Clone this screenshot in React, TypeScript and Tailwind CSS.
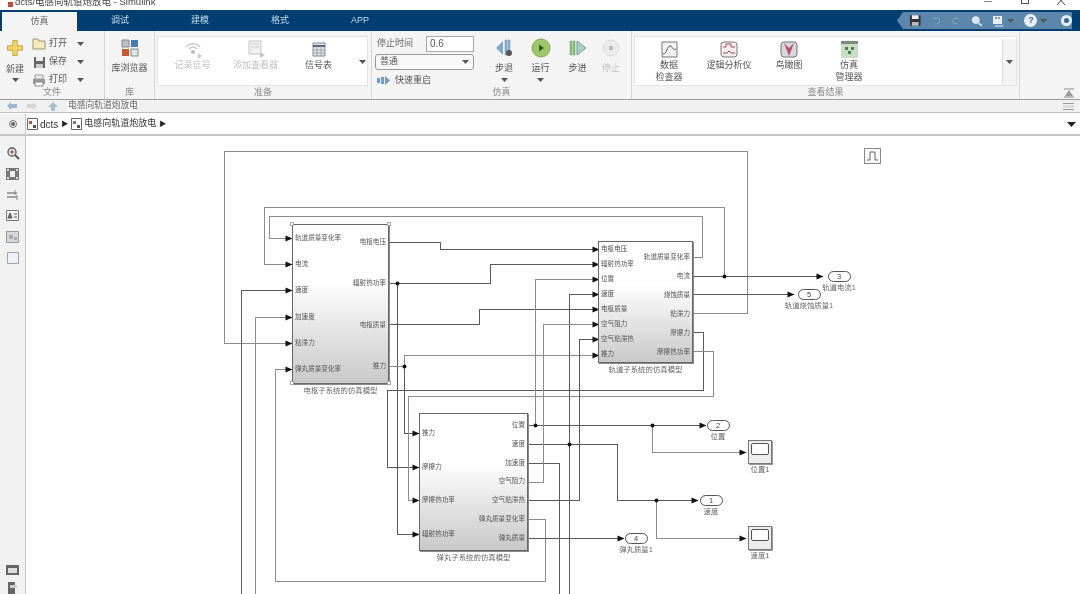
import type { ReactNode } from "react";

const CJK = "font-['Liberation_Sans','Noto_Sans_CJK_SC',sans-serif]";

type Wire = { pts: string; arrow?: boolean; light?: boolean };

// wire coordinates are page pixels, the svg viewBox lines them up with the canvas
const wires: Wire[] = [
  { pts: "693,313 747,313 747,151 224,151 224,343 291,343", arrow: true, light: true },
  { pts: "693,276 822,276", arrow: true },
  { pts: "724,276 724,207 264,207 264,264 291,264", arrow: true, light: true },
  { pts: "693,257 702,257 702,216 269,216 269,238 291,238", arrow: true, light: true },
  { pts: "389,242 440,242 440,249 598,249", arrow: true },
  { pts: "389,283 490,283 490,264 598,264", arrow: true },
  { pts: "397,283 397,534 418,534", arrow: true },
  { pts: "389,324 479,324 479,309 598,309", arrow: true },
  { pts: "389,366 404,366 404,355 598,355", arrow: true, light: true },
  { pts: "404,366 404,433 418,433", arrow: true },
  { pts: "693,332 703,332 703,390 387,390 387,467 418,467", arrow: true },
  { pts: "693,351 713,351 713,396 408,396 408,500 418,500", arrow: true, light: true },
  { pts: "241,594 241,290 291,290", arrow: true },
  { pts: "255,594 255,317 291,317", arrow: true, light: true },
  { pts: "528,519 545,519 545,581 275,581 275,369 291,369", arrow: true, light: true },
  { pts: "528,425 705,425", arrow: true },
  { pts: "535,425 535,279 598,279", arrow: true, light: true },
  { pts: "652,425 652,452 745,452", arrow: true, light: true },
  { pts: "528,444 617,444 617,500 697,500", arrow: true },
  { pts: "656,500 656,538 745,538", arrow: true, light: true },
  { pts: "569,594 569,294 598,294", arrow: true },
  { pts: "528,463 559,463 559,594" },
  { pts: "528,482 543,482 543,324 598,324", arrow: true, light: true },
  { pts: "528,500 579,500 579,339 598,339", arrow: true },
  { pts: "528,538 623,538", arrow: true },
  { pts: "693,294 793,294", arrow: true },
];

const junctions = [
  [724, 276],
  [397, 283],
  [404, 366],
  [535, 425],
  [652, 425],
  [569, 444],
  [656, 500],
];

function arrowHead(pts: string) {
  const last = pts.trim().split(" ").pop()!.split(",").map(Number);
  return `${last[0] + 1},${last[1]} ${last[0] - 6},${last[1] - 3} ${last[0] - 6},${last[1] + 3}`;
}

function Caret({ className = "" }: { className?: string }) {
  return (
    <svg width="7" height="4" viewBox="0 0 7 4" className={className}>
      <path d="M0 0h7L3.5 4z" fill="#555" />
    </svg>
  );
}

function Section({ label, className, children }: { label: string; className: string; children: ReactNode }) {
  return (
    <div className={`flex h-full shrink-0 flex-col border-r border-[#d6d6d6] ${className}`}>
      <div className="min-h-0 flex-1">{children}</div>
      <div className="h-[12px] text-center text-[9px] leading-[10px] text-[#8a8a8a]">{label}</div>
    </div>
  );
}

function RibbonButton({
  icon,
  label,
  width,
  muted,
  caret,
  compact,
}: {
  icon: ReactNode;
  label: ReactNode;
  width: string;
  muted?: boolean;
  caret?: boolean;
  compact?: boolean;
}) {
  return (
    <div className={`flex shrink-0 flex-col items-center ${width}`}>
      <div className={`flex items-center justify-center ${compact ? "h-[20px]" : "h-[24px]"}`}>{icon}</div>
      <div className={`text-center text-[9px] leading-[12px] ${compact ? "" : "mt-[2px]"} ${muted ? "text-[#c0c0c0]" : "text-[#555]"}`}>
        {label}
      </div>
      {caret && <Caret className="mt-[4px]" />}
    </div>
  );
}

function FileRow({ icon, label }: { icon: ReactNode; label: string }) {
  return (
    <div className="flex h-[18px] items-center">
      <div className="flex w-[18px] justify-center">{icon}</div>
      <span className="ml-[1px] w-[28px] text-[9px] text-[#555]">{label}</span>
      <Caret />
    </div>
  );
}

function Port({ children, right }: { children: string; right?: boolean }) {
  return (
    <div className={`text-[6.6px] leading-[8px] whitespace-nowrap text-[#555] ${right ? "text-right" : ""}`}>
      {children}
    </div>
  );
}

function Subsystem({
  className,
  caption,
  inputs,
  outputs,
  inPad,
  outPad,
  selected,
}: {
  className: string;
  caption: string;
  inputs: string[];
  outputs: string[];
  inPad: string;
  outPad: string;
  selected?: boolean;
}) {
  return (
    <div className={`absolute ${className}`}>
      <div className="flex h-full justify-between border border-[#666] bg-linear-to-b from-white from-35% to-[#c9c9c9] px-[2px] shadow-[1px_1px_0_#8a8a8a]">
        <div className={`flex flex-col justify-between ${inPad}`}>
          {inputs.map((t) => (
            <Port key={t}>{t}</Port>
          ))}
        </div>
        <div className={`flex flex-col justify-between ${outPad}`}>
          {outputs.map((t) => (
            <Port key={t} right>
              {t}
            </Port>
          ))}
        </div>
      </div>
      <div className="mt-[2px] text-center text-[7.4px] leading-[9px] whitespace-nowrap text-[#666]">{caption}</div>
      {selected && (
        <>
          <span className="absolute -top-[2px] -left-[2px] size-[4px] border border-[#aaa] bg-white" />
          <span className="absolute -top-[2px] -right-[2px] size-[4px] border border-[#aaa] bg-white" />
          <span className="absolute top-[157px] -left-[2px] size-[4px] border border-[#aaa] bg-white" />
          <span className="absolute top-[157px] -right-[2px] size-[4px] border border-[#aaa] bg-white" />
        </>
      )}
    </div>
  );
}

function Outport({ className, num, label }: { className: string; num: number; label: string }) {
  return (
    <div className={`absolute flex w-[80px] flex-col items-center ${className}`}>
      <div className="flex h-[11px] w-[23px] items-center justify-center rounded-full border border-[#555] bg-white text-[7.5px] text-[#444]">
        {num}
      </div>
      <div className="mt-[1px] text-[7.4px] leading-[10px] whitespace-nowrap text-[#666]">{label}</div>
    </div>
  );
}

function Scope({ className, label }: { className: string; label: string }) {
  return (
    <div className={`absolute flex w-[60px] flex-col items-center ${className}`}>
      <div className="h-[24px] w-[24px] border border-[#777] bg-[#ececec] p-[2px] pb-[8px] shadow-[1px_1px_0_#999]">
        <div className="h-full rounded-[2px] border border-[#555] bg-white" />
      </div>
      <div className="mt-[1px] text-[7.4px] leading-[10px] whitespace-nowrap text-[#666]">{label}</div>
    </div>
  );
}

function Icon({ children, w = 16, h = 16, vb }: { children: ReactNode; w?: number; h?: number; vb?: string }) {
  return (
    <svg width={w} height={h} viewBox={vb ?? `0 0 ${w} ${h}`}>
      {children}
    </svg>
  );
}

function WinTabs() {
  return (
    <div className="flex h-[21px] shrink-0 items-end bg-[#003e72] pl-[2px]">
      <div className="flex h-[19px] w-[75px] items-center justify-center bg-[#f4f4f4] text-[9px] text-[#666]">仿真</div>
      {["调试", "建模", "格式", "APP"].map((t, i) => (
        <div key={t} className={`flex h-[21px] items-center justify-center text-[9px] text-[#c3dcee] ${i === 0 ? "ml-[3px] w-[80px]" : "w-[80px]"}`}>
          {t}
        </div>
      ))}
      <div className="mt-auto mr-[8px] mb-[2px] ml-auto flex h-[17px] w-[175px] items-center gap-[10px] bg-[#5c87ad] pl-[12px] [clip-path:polygon(6px_0,100%_0,100%_100%,6px_100%,0_50%)]">
        <Icon w={13} h={13}>
          <path d="M1 1h11v11H1z" fill="#333" />
          <path d="M3 1h7v4H3z" fill="#eee" />
          <path d="M3 8h7v4H3z" fill="#bbb" />
        </Icon>
        <Icon w={10} h={10}>
          <path d="M2 3c3-2 6-1 6 2s-3 3-5 3" fill="none" stroke="#7fa3c4" strokeWidth="1.2" />
        </Icon>
        <Icon w={10} h={10}>
          <path d="M8 3c-3-2-6-1-6 2s3 3 5 3" fill="none" stroke="#7fa3c4" strokeWidth="1.2" />
        </Icon>
        <Icon w={12} h={12}>
          <circle cx="5" cy="5" r="3.5" fill="#d5e6f2" stroke="#e8f1f7" />
          <path d="M8 8l3 3" stroke="#e8f1f7" strokeWidth="1.6" />
        </Icon>
        <div className="flex items-center gap-[3px]">
          <Icon w={12} h={12}>
            <path d="M1 1h9v8H1z" fill="#e5eef5" />
            <path d="M3 11h8" stroke="#e5eef5" />
            <path d="M3 3h2M6 3h2" stroke="#345" />
          </Icon>
          <Caret />
        </div>
        <div className="flex items-center gap-[3px]">
          <div className="flex size-[13px] items-center justify-center rounded-full bg-[#e8eef3] text-[9px] font-bold text-[#3b6a94]">?</div>
          <Caret />
        </div>
        <div className="ml-[4px] flex size-[11px] items-center justify-center rounded-full bg-[#e8eef3]">
          <span className="size-[5px] rounded-full bg-[#2f6899]" />
        </div>
      </div>
    </div>
  );
}

function Ribbon() {
  return (
    <div className="flex h-[69px] shrink-0 border-b border-[#9c9c9c] bg-[#f4f4f4]">
      <Section label="文件" className="w-[105px]">
        <div className="flex">
          <div className="flex w-[30px] flex-col items-center pt-[5px]">
            <div className="flex h-[24px] items-center">
              <Icon w={18} h={18} vb="0 0 24 24">
                <path d="M9 2h6v7h7v6h-7v7H9v-7H2V9h7z" fill="#f3d262" stroke="#b79a3a" strokeLinejoin="round" />
              </Icon>
            </div>
            <span className="mt-[3px] text-[9px] leading-[12px] text-[#555]">新建</span>
            <Caret className="mt-[3px]" />
          </div>
          <div className="pt-[4px]">
            <FileRow
              label="打开"
              icon={
                <Icon w={14} h={12}>
                  <path d="M1 1h5l1 2h6v8H1z" fill="#f4e9bb" stroke="#9b9476" />
                </Icon>
              }
            />
            <FileRow
              label="保存"
              icon={
                <Icon w={13} h={13}>
                  <path d="M1 1h11v11H1z" fill="#666" />
                  <path d="M3 1h7v4H3z" fill="#eee" />
                  <path d="M3 8h7v4H3z" fill="#ccc" />
                </Icon>
              }
            />
            <FileRow
              label="打印"
              icon={
                <Icon w={14} h={13}>
                  <path d="M3 1h8v4H3z" fill="#eee" stroke="#999" />
                  <path d="M1 5h12v5H1z" fill="#999" />
                  <path d="M3 8h8v4H3z" fill="#fff" stroke="#888" />
                </Icon>
              }
            />
          </div>
        </div>
      </Section>
      <Section label="库" className="w-[50px]">
        <div className="flex justify-center pt-[5px]">
          <RibbonButton
            width="w-[48px]"
            label="库浏览器"
            icon={
              <Icon w={18} h={18}>
                <path d="M1 1h7v7H1z" fill="#b9c2c6" stroke="#888" />
                <path d="M10 1h7v7h-7z" fill="#3f7fb0" />
                <path d="M1 10h7v7H1z" fill="#bd5b2c" />
                <path d="M10 10h7v7h-7z" fill="#dfe5e8" stroke="#888" />
              </Icon>
            }
          />
        </div>
      </Section>
      <Section label="准备" className="w-[217px]">
        <div className="mt-[5px] ml-[2px] flex h-[50px] w-[211px] border border-[#e4e4e4] bg-white pt-[2px] pl-[3px]">
          <RibbonButton
            compact
            width="w-[63px]"
            muted
            label="记录信号"
            icon={
              <Icon w={20} h={20}>
                <path d="M3 8a9 9 0 0 1 14 0M6 10a5 5 0 0 1 8 0" fill="none" stroke="#ccc" strokeWidth="1.5" />
                <circle cx="10" cy="13" r="2" fill="#bbb" />
                <path d="M15 14l4 3-4 3z" fill="#c9c9c9" />
              </Icon>
            }
          />
          <RibbonButton
            compact
            width="w-[63px]"
            muted
            label="添加查看器"
            icon={
              <Icon w={20} h={20}>
                <path d="M3 2h12v13H3z" fill="#f0f0f0" stroke="#c4c4c4" />
                <path d="M5 5h8M5 8h8" stroke="#d0d0d0" />
                <path d="M14 13l5 3-5 3z" fill="#c4c4c4" />
              </Icon>
            }
          />
          <RibbonButton
            compact
            width="w-[63px]"
            label="信号表"
            icon={
              <Icon w={14} h={15}>
                <path d="M1 1h12v13H1z" fill="#dfe6ec" stroke="#7d8a94" />
                <path d="M1 4h12" stroke="#55626c" strokeWidth="2" />
                <path d="M1 8h12M1 11h12M5 4v10M9 4v10" stroke="#9aa7b0" />
              </Icon>
            }
          />
          <div className="ml-auto flex w-[10px] items-center justify-center">
            <Caret />
          </div>
        </div>
      </Section>
      <Section label="仿真" className="w-[260px]">
        <div className="flex pt-[4px] pl-[3px]">
          <div className="w-[99px] shrink-0">
            <div className="flex h-[17px] items-center justify-between">
              <span className="ml-[2px] text-[9px] text-[#666]">停止时间</span>
              <div className="h-[16px] w-[48px] border border-[#aaa] bg-white pl-[3px] text-[10px] leading-[14px] text-[#555]">0.6</div>
            </div>
            <div className="mt-[2px] flex h-[16px] items-center justify-between rounded-[3px] border border-[#999] bg-[#f8f8f8] px-[4px] text-[9px] text-[#555]">
              普通
              <Caret />
            </div>
            <div className="mt-[3px] flex items-center gap-[5px] pl-[2px] text-[9px] leading-[14px] text-[#555]">
              <Icon w={13} h={9}>
                <path d="M0 2h3v5H0zM4 1h3v7H4zM8 0l5 4.500-5 4.500z" fill="#6f9cc0" />
              </Icon>
              快速重启
            </div>
          </div>
          <div className="ml-[12px] flex pt-[1px]">
            <RibbonButton
              width="w-[36px]"
              caret
              label="步退"
              icon={
                <Icon w={18} h={18}>
                  <path d="M8 2v14L1 9z" fill="#80a9c9" />
                  <path d="M10 1h2v15h-2zM13 1h2v15h-2z" fill="#8fb4d0" stroke="#6d8ea8" strokeWidth=".5" />
                  <circle cx="14" cy="14" r="3" fill="#555" />
                </Icon>
              }
            />
            <RibbonButton
              width="w-[37px]"
              caret
              label="运行"
              icon={
                <Icon w={20} h={20}>
                  <circle cx="10" cy="10" r="9" fill="#9fc56a" stroke="#86a85c" />
                  <path d="M8 6.500l5 3.500-5 3.500z" fill="#2f5a16" />
                </Icon>
              }
            />
            <RibbonButton
              width="w-[37px]"
              label="步进"
              icon={
                <Icon w={18} h={16}>
                  <path d="M1 1h2v14H1zM4 1h2v14H4z" fill="#8cc08a" stroke="#6f9c72" strokeWidth=".5" />
                  <path d="M8 1l9 7-9 7z" fill="#a9d0c4" stroke="#6f9c8a" />
                </Icon>
              }
            />
            <RibbonButton
              width="w-[30px]"
              muted
              label="停止"
              icon={
                <Icon w={18} h={18}>
                  <circle cx="9" cy="9" r="8" fill="#ebebeb" stroke="#dcdcdc" />
                  <path d="M7 7h4v4H7z" fill="#bdbdbd" />
                </Icon>
              }
            />
          </div>
        </div>
      </Section>
      <Section label="查看结果" className="w-[388px]">
        <div className="mt-[5px] ml-[2px] flex h-[50px] w-[383px] border border-[#e4e4e4] bg-white pt-[2px] pl-[4px]">
          <RibbonButton
            compact
            width="w-[60px]"
            label={
              <>
                数据
                <br />
                检查器
              </>
            }
            icon={
              <Icon w={17} h={17}>
                <path d="M1 1h15v15H1z" fill="#f2f2f2" stroke="#777" />
                <path d="M2 13c4 0 4-8 7-8s2 5 6 3" fill="none" stroke="#555" />
              </Icon>
            }
          />
          <RibbonButton
            compact
            width="w-[60px]"
            label="逻辑分析仪"
            icon={
              <Icon w={18} h={17}>
                <rect x="1" y="1" width="16" height="15" rx="3" fill="#f8eeee" stroke="#777" />
                <path d="M3 6h3V3h5v3h4M3 12h4l2-2 2 2h4" fill="none" stroke="#a05050" />
              </Icon>
            }
          />
          <RibbonButton
            compact
            width="w-[60px]"
            label="鸟瞰图"
            icon={
              <Icon w={18} h={17}>
                <rect x="1" y="1" width="16" height="15" rx="3" fill="#d7d7dd" stroke="#777" />
                <path d="M4 2l5 13 5-13-5 5z" fill="#b9506a" />
              </Icon>
            }
          />
          <RibbonButton
            compact
            width="w-[60px]"
            label={
              <>
                仿真
                <br />
                管理器
              </>
            }
            icon={
              <Icon w={17} h={17}>
                <path d="M0 0h17v17H0z" fill="#c9dcc4" />
                <path d="M0 0h17v3H0z" fill="#7c8a78" />
                <path d="M4 6h3v3H4zM10 6h3v3h-3zM7 10h3v3H7z" fill="#4d7d55" />
              </Icon>
            }
          />
          <div className="ml-auto flex w-[14px] items-center justify-center border-l border-[#e0e0e0] bg-[#f4f4f4]">
            <Caret />
          </div>
        </div>
      </Section>
      <div className="flex flex-1 items-end justify-end pr-[5px] pb-[1px]">
        <Icon w={12} h={10}>
          <path d="M1 1h10M1 9h10" stroke="#888" />
          <path d="M6 2l4 6H2z" fill="#999" />
        </Icon>
      </div>
    </div>
  );
}

function BlockGlyph({ tone }: { tone: string }) {
  return (
    <svg width="11" height="12" viewBox="0 0 11 12">
      <path d="M.5.500h10v11H.5z" fill="#fff" stroke="#666" />
      <path d="M2 3h3v3H2z" fill={tone} />
      <path d="M6 7h3v3H6z" fill="#555" />
    </svg>
  );
}

function SideIcons() {
  return (
    <div className="flex w-[26px] shrink-0 flex-col items-center border-r border-[#c8c8c8] bg-[#f1f1f1] pt-[6px]">
      {[
        <Icon key="a" w={14} h={14}>
          <circle cx="6" cy="6" r="4" fill="#e8eef0" stroke="#555" strokeWidth="1.300" />
          <path d="M9 9l4 4" stroke="#555" strokeWidth="2" />
          <path d="M4 6h4M6 4v4" stroke="#a33" />
        </Icon>,
        <Icon key="b" w={13} h={12}>
          <path d="M0 0h13v12H0z" fill="#777" />
          <path d="M4 3h5v6H4z" fill="#eee" />
          <path d="M1 1h2v2H1zM10 1h2v2h-2zM1 9h2v2H1zM10 9h2v2h-2z" fill="#ddd" />
        </Icon>,
        <Icon key="c" w={12} h={10}>
          <path d="M0 3h10M0 7h10" stroke="#555" />
          <path d="M8 0v5M10 5v5" stroke="#888" />
        </Icon>,
        <Icon key="d" w={13} h={11}>
          <path d="M.5.500h12v10H.5z" fill="#f4f4f4" stroke="#777" />
          <path d="M2 8l2-5 2 5zM8 4h3M8 7h3" stroke="#555" fill="#777" />
        </Icon>,
        <Icon key="e" w={13} h={12}>
          <path d="M.5.500h12v11H.5z" fill="#d5d9db" stroke="#999" />
          <path d="M3 4h4v4H3zM8 6h3v3H8z" fill="#aaa" />
        </Icon>,
        <Icon key="f" w={12} h={12}>
          <path d="M.5.500h11v11H.5z" fill="#f0f0f8" stroke="#a5a5a5" />
        </Icon>,
      ].map((icon, i) => (
        <div key={i} className="flex h-[21px] shrink-0 items-center justify-center">
          {icon}
        </div>
      ))}
      <div className="mt-auto flex flex-col items-center gap-[7px]">
        <Icon w={13} h={10}>
          <path d="M0 0h13v10H0z" fill="#666" />
          <path d="M2 3h9v5H2z" fill="#ddd" />
        </Icon>
        <Icon w={13} h={12}>
          <path d="M2 0h7v12H2z" fill="#666" />
          <path d="M4 3h7v3H4z" fill="#ccc" />
        </Icon>
      </div>
    </div>
  );
}

function Diagram() {
  return (
    <div className="relative min-w-0 flex-1 overflow-hidden bg-white">
      <svg className="absolute inset-0" width="1054" height="458" viewBox="25.5 135.5 1054 458" shapeRendering="crispEdges">
        {wires.map((w) => (
          <polyline key={w.pts} points={w.pts} fill="none" stroke={w.light ? "#8c8c8c" : "#5a5a5a"} strokeWidth="1" />
        ))}
        {wires
          .filter((w) => w.arrow)
          .map((w) => (
            <polygon key={w.pts} points={arrowHead(w.pts)} fill="#111" shapeRendering="auto" />
          ))}
        {junctions.map(([x, y]) => (
          <circle key={`${x}-${y}`} cx={x} cy={y} r="2" fill="#111" shapeRendering="auto" />
        ))}
      </svg>

      <Subsystem
        selected
        className="top-[88px] left-[266px] h-[160px] w-[97px]"
        caption="电枢子系统的仿真模型"
        inPad="pt-[9px] pb-[10px]"
        outPad="pt-[13px] pb-[13px]"
        inputs={["轨道质量变化率", "电流", "速度", "加速度", "粘滞力", "弹丸质量变化率"]}
        outputs={["电枢电压", "辐射热功率", "电枢质量", "推力"]}
      />
      <Subsystem
        className="top-[105px] left-[572px] h-[122px] w-[95px]"
        caption="轨道子系统的仿真模型"
        inPad="pt-[3px] pb-[4px]"
        outPad="pt-[11px] pb-[6px]"
        inputs={["电枢电压", "辐射热功率", "位置", "速度", "电枢质量", "空气阻力", "空气粘滞热", "推力"]}
        outputs={["轨道质量变化率", "电流", "烧蚀质量", "粘滞力", "摩擦力", "摩擦热功率"]}
      />
      <Subsystem
        className="top-[277px] left-[393px] h-[138px] w-[109px]"
        caption="弹丸子系统的仿真模型"
        inPad="pt-[15px] pb-[12px]"
        outPad="pt-[7px] pb-[8px]"
        inputs={["推力", "摩擦力", "摩擦热功率", "辐射热功率"]}
        outputs={["位置", "速度", "加速度", "空气阻力", "空气粘滞热", "弹丸质量变化率", "弹丸质量"]}
      />

      <Outport className="top-[135px] left-[773px]" num={3} label="轨道电流1" />
      <Outport className="top-[153px] left-[743px]" num={5} label="轨道烧蚀质量1" />
      <Outport className="top-[284px] left-[652px]" num={2} label="位置" />
      <Outport className="top-[359px] left-[645px]" num={1} label="速度" />
      <Outport className="top-[397px] left-[570px]" num={4} label="弹丸质量1" />
      <Scope className="top-[304px] left-[704px]" label="位置1" />
      <Scope className="top-[390px] left-[704px]" label="速度1" />

      <div className="absolute top-[12px] left-[838px] flex h-[16px] w-[17px] items-center justify-center border border-[#888] bg-[#fafafa]">
        <svg width="11" height="10" viewBox="0 0 11 10">
          <path d="M0 9h3V1h5v8h3" fill="none" stroke="#666" />
        </svg>
      </div>
    </div>
  );
}

export default function App() {
  return (
    <div className={`flex h-[594px] w-[1080px] flex-col overflow-hidden bg-white blur-[0.4px] ${CJK}`}>
      <div className="flex h-[10px] shrink-0 items-end overflow-hidden bg-white">
        <span className="mb-[3px] ml-[8px] size-[5px] shrink-0 bg-[#b5533c]" />
        <span className="mb-[2px] ml-[2px] text-[9.5px] leading-[12px] whitespace-nowrap text-[#444]">dcts/电感向轨道炮放电 - Simulink</span>
        <div className="ml-auto flex items-start self-start text-[#444]">
          <span className="mt-[1px] mr-[29px] h-[1px] w-[8px] bg-[#888]" />
          <span className="mr-[27px] h-[4px] w-[8px] border-x border-b border-[#555]" />
          <svg width="10" height="5" viewBox="0 4 10 5" className="mr-[14px]">
            <path d="M1 0l8 9M9 0L1 9" stroke="#444" fill="none" />
          </svg>
        </div>
      </div>
      <WinTabs />
      <Ribbon />

      <div className="flex h-[13px] shrink-0 items-center border-b border-[#bdbdbd] bg-[#f0f0f0] pl-[7px]">
        <svg width="10" height="8" viewBox="0 0 10 8">
          <path d="M0 4l4-4v2h6v4H4v2z" fill="#9db7c9" />
        </svg>
        <svg width="10" height="8" viewBox="0 0 10 8" className="ml-[10px]">
          <path d="M10 4L6 0v2H0v4h6v2z" fill="#d5d5d5" />
        </svg>
        <svg width="10" height="9" viewBox="0 0 10 9" className="ml-[11px]">
          <path d="M5 0l5 5H7v4H3V5H0z" fill="#a9bfcf" />
        </svg>
        <span className="ml-[9px] flex h-full items-center bg-[#f7f7f7] px-[1px] text-[8.75px] text-[#666]">电感向轨道炮放电</span>
        <svg width="11" height="7" viewBox="0 0 11 7" className="mr-[6px] ml-auto">
          <path d="M0 .5h11M0 6.500h11" stroke="#999" />
          <path d="M0 2h11v3H0z" fill="#ddd" />
        </svg>
      </div>

      <div className="flex h-[23px] shrink-0 items-center border-b-2 border-[#c4c4c4] bg-white pt-[1px]">
        <div className="flex h-full w-[26px] shrink-0 items-center justify-center border-r border-[#c8c8c8] bg-[#f1f1f1]">
          <div className="flex size-[8px] items-center justify-center rounded-full border border-[#777]">
            <span className="size-[4px] rounded-full bg-[#666]" />
          </div>
        </div>
        <div className="ml-[1px]">
          <BlockGlyph tone="#b5533c" />
        </div>
        <span className="ml-[2px] text-[10px] text-[#333]">dcts</span>
        <span className="mx-[3px] text-[7px] text-[#222]">▶</span>
        <BlockGlyph tone="#7a7a7a" />
        <span className="ml-[2px] text-[9px] text-[#333]">电感向轨道炮放电</span>
        <span className="ml-[3px] text-[7px] text-[#222]">▶</span>
        <svg width="9" height="5" viewBox="0 0 9 5" className="mr-[4px] ml-auto">
          <path d="M0 0h9L4.500 5z" fill="#222" />
        </svg>
      </div>

      <div className="flex min-h-0 flex-1">
        <SideIcons />
        <Diagram />
      </div>
    </div>
  );
}
